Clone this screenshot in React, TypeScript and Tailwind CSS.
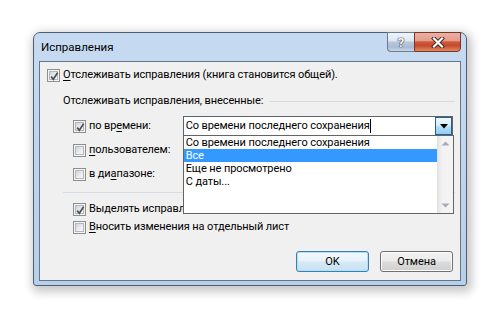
import React from "react";

function Check({ checked }: { checked?: boolean }) {
  return (
    <span className="relative inline-flex w-[13px] h-[13px] shrink-0 border border-[#8e8f8f] bg-[#f4f4f4] p-[1px]">
      <span className="block w-full h-full border border-[#b4b8bd] bg-[linear-gradient(135deg,#cfd3d8_0%,#eceef0_60%,#f8f8f8_100%)]" />
      {checked && (
        <svg className="absolute left-[1px] top-[1px]" width="11" height="11" viewBox="0 0 11 11">
          <path d="M2.2 5.6 L4.3 8.2 L8.6 1.8" fill="none" stroke="#4c5158" strokeWidth="1.7" strokeLinejoin="miter" />
        </svg>
      )}
    </span>
  );
}

function U({ children }: { children: React.ReactNode }) {
  return <span className="underline underline-offset-[2px] decoration-[1px]">{children}</span>;
}

export default function App() {
  return (
    <div
      className="w-[501px] h-[321px] bg-white pl-[33px] pt-[32px] text-[11px] tracking-[-0.1px] text-black leading-[16px]"
      style={{ fontFamily: 'Roboto, "Noto Sans", sans-serif' }}
    >
      <div className="w-[434px] h-[254px] rounded-t-[7px] rounded-b-[3px] border border-[#4e5f74] bg-[linear-gradient(180deg,#c6dbf2_0%,#bed4ec_60%,#b8cfe9_100%)] shadow-[2px_3px_10px_3px_rgba(0,0,0,0.22)] flex flex-col">
        {/* title bar */}
        <div className="h-[28px] flex items-start justify-between pl-[7px] pr-[5px]">
          <span className="mt-[6px] text-[11.5px] tracking-normal">Исправления</span>
          <div className="flex -mt-px">
            <div className="w-[27px] h-[20px] rounded-bl-[4px] border border-[#6b7c92] border-r-0 bg-[linear-gradient(180deg,#eef3f9_0%,#dde6f1_45%,#b8c8db_50%,#a9bcd2_80%,#c9d7e7_100%)] flex items-center justify-center">
              <span className="text-white font-bold text-[13px] leading-none [text-shadow:0_0_1px_#334,0_0_1px_#334,0_0_1px_#334]">?</span>
            </div>
            <div className="w-[47px] h-[20px] rounded-br-[4px] border border-[#7a3425] bg-[linear-gradient(180deg,#eab0a3_0%,#e39d8c_42%,#d0573b_50%,#c64b2d_70%,#df8b66_100%)] flex items-center justify-center">
              <svg width="14" height="11" viewBox="0 0 14 11">
                <path d="M3 1.5 L11 9.5 M11 1.5 L3 9.5" stroke="#3b2420" strokeWidth="4" strokeLinecap="square" />
                <path d="M3 1.5 L11 9.5 M11 1.5 L3 9.5" stroke="#ffffff" strokeWidth="2.2" strokeLinecap="square" />
              </svg>
            </div>
          </div>
        </div>
        {/* client */}
        <div className="mx-[5px] h-[220px] border border-[#66768a] bg-[#f0f0f0]">
          <div className="flex flex-col pt-[5px] pl-[7px] pr-[7px]">
            <div className="flex items-center h-[16px] gap-[3px]">
              <Check checked />
              <span><U>О</U>тслеживать исправления (книга становится общей).</span>
            </div>
            <div className="mt-[10px] h-[16px] flex items-center pl-[16px] -mr-[2px]">
              <span>Отслеживать исправления, внесенные:</span>
              <span className="flex-1 ml-[6px] h-px bg-[#d5dce4]" />
            </div>
            <div className="mt-[7px] h-[20px] flex items-center pl-[26px]">
              <div className="w-[110px] flex items-center gap-[3px]">
                <Check checked />
                <span>по вр<U>е</U>мени:</span>
              </div>
              <div className="relative w-[271px] h-[20px] border border-[#5f6469] bg-white flex items-center">
                <span className="pl-[2px]">Со времени последнего сохранения</span>
                <span className="w-px h-[14px] bg-black" />
                <div className="absolute right-0 top-0 w-[17px] h-[18px] border border-[#2c5f8c] bg-[linear-gradient(180deg,#eef8fe_0%,#d6eefb_45%,#b4def6_55%,#8fcdf2_100%)] flex items-center justify-center">
                  <svg width="8" height="5" viewBox="0 0 8 5">
                    <path d="M0 0 L8 0 L4 4.5 Z" fill="#000" />
                  </svg>
                </div>
                {/* dropdown list */}
                <div className="absolute left-[-1px] top-full w-[271px] h-[79px] border border-[#646464] bg-white flex z-10">
                  <div className="flex-1 flex flex-col leading-[13px]">
                    <div className="h-[13px] pl-[2px]">Со времени последнего сохранения</div>
                    <div className="h-[13px] pl-[2px] bg-[#3399ff] text-white">Все</div>
                    <div className="h-[13px] pl-[2px]">Еще не просмотрено</div>
                    <div className="h-[13px] pl-[2px]">С даты...</div>
                  </div>
                  <div className="w-[16px] h-full bg-[linear-gradient(90deg,#e6e6e6_0%,#f3f3f3_30%,#f3f3f3_100%)] border-l border-[#e0e0e0] flex flex-col items-center justify-between py-[5px]">
                    <svg width="9" height="5" viewBox="0 0 9 5">
                      <path d="M0.5 4.5 L4.5 0.5 L8.5 4.5 Z" fill="#a5acb5" />
                    </svg>
                    <svg width="9" height="5" viewBox="0 0 9 5">
                      <path d="M0.5 0.5 L4.5 4.5 L8.5 0.5 Z" fill="#a5acb5" />
                    </svg>
                  </div>
                </div>
              </div>
            </div>
            <div className="mt-[6px] h-[16px] flex items-center gap-[3px] pl-[26px]">
              <Check />
              <span><U>п</U>ользователем:</span>
            </div>
            <div className="mt-[8px] h-[16px] flex items-center gap-[3px] pl-[26px]">
              <Check />
              <span>в ди<U>а</U>пазоне:</span>
            </div>
            <div className="mt-[10px] ml-[16px] w-[392px] h-px bg-[#d5dce4]" />
            <div className="mt-[8px] h-[16px] flex items-center gap-[3px] pl-[26px]">
              <Check checked />
              <span>Выделять исправления на экране</span>
            </div>
            <div className="mt-[2px] h-[16px] flex items-center gap-[3px] pl-[26px]">
              <Check />
              <span><U>В</U>носить изменения на отдельный лист</span>
            </div>
            <div className="mt-[16px] flex justify-end gap-[11px]">
              <div className="w-[73px] h-[21px] rounded-[3px] border border-[#3c7fb1] bg-[linear-gradient(180deg,#f4f9fd_0%,#e6f2fb_48%,#d6e9f6_52%,#c9e1f2_100%)] shadow-[inset_0_0_0_1px_#aee0f8] flex items-center justify-center">
                OK
              </div>
              <div className="w-[73px] h-[21px] rounded-[3px] border border-[#707070] bg-[linear-gradient(180deg,#f2f2f2_0%,#ebebeb_48%,#dddddd_52%,#cfcfcf_100%)] shadow-[inset_0_0_0_1px_#fcfcfc] flex items-center justify-center">
                Отмена
              </div>
            </div>
          </div>
        </div>
      </div>
    </div>
  );
}
